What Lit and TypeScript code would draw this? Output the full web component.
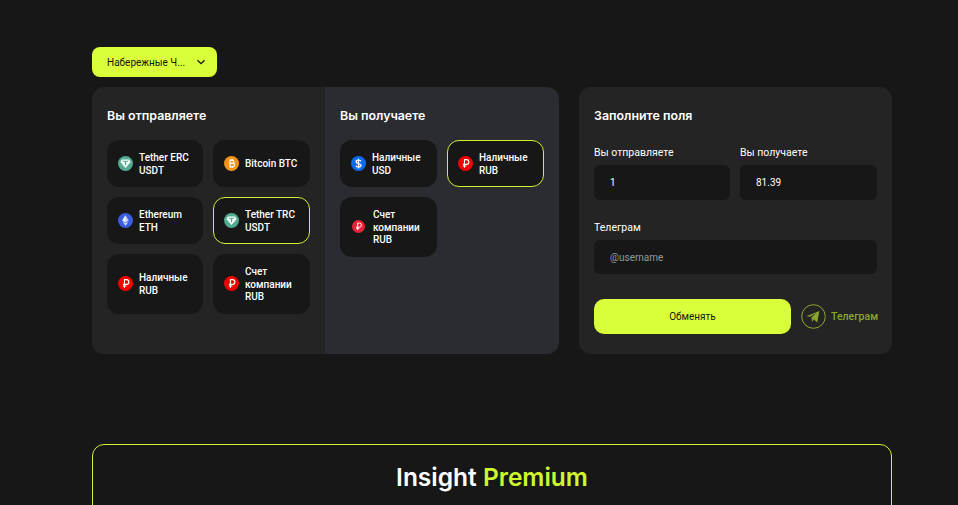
import { LitElement, html, css, svg } from "lit";
import { customElement } from "lit/decorators.js";

const ruble = (bg: string) => svg`<circle cx="8" cy="8" r="8" fill="${bg}"/><path d="M6.9 12.4V3.9h2.2a2.5 2.5 0 0 1 0 5H5.2M5.2 10.6h3.8" fill="none" stroke="#fff" stroke-width="1.2"/>`;
const tether = svg`<circle cx="8" cy="8" r="8" fill="#50ab92"/><path d="M4.3 3.6h7.4l1.8 2.7L8 12.8 2.5 6.3z" fill="#fff"/><path d="M5 5h6v1.1H8.7v3.8H7.3V6.1H5z" fill="#50ab92"/>`;
const btc = svg`<circle cx="8" cy="8" r="8" fill="#f7931a"/><path d="M6.4 4.6h2.5a1.6 1.6 0 0 1 0 3.3H6.4h3a1.8 1.8 0 0 1 0 3.6H6.4zM7.2 3.3v1.3M9 3.3v1.3M7.2 11.5v1.3M9 11.5v1.3" fill="none" stroke="#fff" stroke-width="1.2"/>`;
const eth = svg`<circle cx="8" cy="8" r="8" fill="#3b5ee0"/><path d="M8 2.5 11.4 8 8 10 4.6 8z" fill="#c5d2fa"/><path d="M8 2.5V10L4.6 8z" fill="#eef2ff"/><path d="M4.8 9 8 11 11.2 9 8 13.5z" fill="#dbe3fd"/>`;
const usd = svg`<circle cx="8" cy="8" r="8" fill="#0b6cf0"/><path d="M10.7 5.6C10.3 4.7 9.3 4.3 8 4.3c-1.5 0-2.6.7-2.6 1.9 0 2.7 5.3 1 5.3 3.7 0 1.2-1.2 1.9-2.7 1.9-1.4 0-2.4-.5-2.8-1.5M8 2.8v10.4" fill="none" stroke="#fff" stroke-width="1.4"/>`;

type Item = { label: string; icon: unknown; small?: boolean; active?: boolean };

const send: Item[] = [
  { label: "Tether ERC USDT", icon: tether },
  { label: "Bitcoin BTC", icon: btc },
  { label: "Ethereum ETH", icon: eth },
  { label: "Tether TRC USDT", icon: tether, active: true },
  { label: "Наличные RUB", icon: ruble("#f30000") },
  { label: "Счет компании RUB", icon: ruble("#f30000") },
];
const receive: Item[] = [
  { label: "Наличные USD", icon: usd },
  { label: "Наличные RUB", icon: ruble("#f30000"), active: true },
  { label: "Счет компании RUB", icon: ruble("#ee2138"), small: true },
];

@customElement("app-root")
export class AppRoot extends LitElement {
  static styles = css`
    :host {
      display: block;
      height: 505px;
      overflow: hidden;
      background: #171717;
      font-family: Roboto, "Noto Sans", sans-serif;
      color: #fff;
    }
    * { box-sizing: border-box; }
    .page { width: 800px; margin-left: 92px; padding-top: 47px; }
    .select {
      width: 125px; height: 30px; border-radius: 8px; background: #d9ff3a; color: #171717;
      display: flex; align-items: center; justify-content: space-between; padding: 0 11px 0 15px;
      font-size: 10px; margin-bottom: 10px;
    }
    .select svg { width: 10px; height: 10px; flex: none; }
    .main { display: flex; gap: 20px; }
    .exchange { width: 467px; display: flex; border-radius: 12px; overflow: hidden; }
    .side { width: 233px; padding: 20px 15px; background: #242424; }
    .side.alt { width: 234px; background: #2b2c31; }
    h2 { margin: 0; padding-top: 1px; font-family: Inter, sans-serif; font-size: 12.4px; line-height: 16px; font-weight: 600; }
    .side h2 { margin-bottom: 16px; }
    .grid { display: grid; grid-template-columns: 96px 97px; gap: 10px; }
    .alt .grid { grid-template-columns: 97px 97px; }
    .item {
      display: flex; align-items: center; gap: 6px; padding: 11px 10px 9px; background: #171717;
      border: 1px solid transparent; border-radius: 12px;
      font-size: 10px; line-height: 12.5px; font-weight: 500;
    }
    .item.active { border-color: #d0f036; }
    .item svg { width: 15px; height: 15px; flex: none; margin-top: -2px; }
    .item.small svg { width: 13px; height: 13px; margin: -2px 2px 0 1px; }
    .form { flex: 1; background: #242424; border-radius: 12px; padding: 20px 15px; }
    .form h2 { margin-bottom: 21px; }
    .row { display: flex; gap: 10px; margin-bottom: 20px; }
    .field { flex: 1; min-width: 0; }
    .field:first-child { flex: 0 0 136px; }
    label { display: block; padding-top: 1px; font-size: 10.5px; line-height: 14px; margin-bottom: 5px; font-weight: 400; color: #fff; }
    input {
      display: block; width: 100%; height: 35px; border: none; outline: none; border-radius: 6px;
      background: #171717; color: #fff; font: inherit; font-size: 10px; padding: 0 16px;
    }
    input::placeholder { color: #8f97a3; }
    .tg-field input { height: 34px; }
    .tg-field { margin-bottom: 25px; }
    .actions { display: flex; align-items: center; gap: 10px; }
    .submit {
      flex: 1; height: 35px; border: none; border-radius: 10px; background: #d9ff3a; color: #171717;
      font: inherit; font-size: 10px; padding: 0;
    }
    .tg { display: flex; align-items: center; gap: 5px; color: #8ba62e; font-size: 10.5px; font-weight: 500; width: 76px; }
    .tg svg { width: 25px; height: 25px; flex: none; }
    .premium {
      margin-top: 90px; height: 120px; border: 1px solid #d0f036; border-radius: 12px;
      padding-top: 16px; text-align: center;
    }
    .premium h1 { margin: 0; font-family: Inter, sans-serif; font-size: 24.5px; line-height: 32px; font-weight: 600; }
    .premium em { font-style: normal; color: #cdf72f; }
  `;

  private cards(items: Item[]) {
    return html`<div class="grid">
      ${items.map(
        (i) => html`<div class="item ${i.active ? "active" : ""} ${i.small ? "small" : ""}">
          <svg viewBox="0 0 16 16">${i.icon}</svg><span>${i.label}</span>
        </div>`
      )}
    </div>`;
  }

  render() {
    return html`<div class="page">
      <div class="select">
        <span>Набережные Ч...</span>
        <svg viewBox="0 0 10 10"><path d="M1.5 3.2 5 6.7l3.5-3.5" fill="none" stroke="#171717" stroke-width="1.3"/></svg>
      </div>
      <div class="main">
        <div class="exchange">
          <section class="side"><h2>Вы отправляете</h2>${this.cards(send)}</section>
          <section class="side alt"><h2>Вы получаете</h2>${this.cards(receive)}</section>
        </div>
        <section class="form">
          <h2>Заполните поля</h2>
          <div class="row">
            <div class="field"><label>Вы отправляете</label><input value="1" /></div>
            <div class="field"><label>Вы получаете</label><input value="81.39" /></div>
          </div>
          <div class="tg-field"><label>Телеграм</label><input placeholder="@username" /></div>
          <div class="actions">
            <button class="submit">Обменять</button>
            <div class="tg">
              <svg viewBox="0 0 25 25"><circle cx="12.5" cy="12.5" r="11.8" fill="none" stroke="#8ba62e" stroke-width="1"/><path d="M5.5 12.3 18.3 7l-2 11.5-3.6-3.3-1.6 2.6-.7-4.4 5-4.3-6.5 3.7z" fill="#8ba62e"/></svg>
              <span>Телеграм</span>
            </div>
          </div>
        </section>
      </div>
      <section class="premium"><h1>Insight <em>Premium</em></h1></section>
    </div>`;
  }
}
